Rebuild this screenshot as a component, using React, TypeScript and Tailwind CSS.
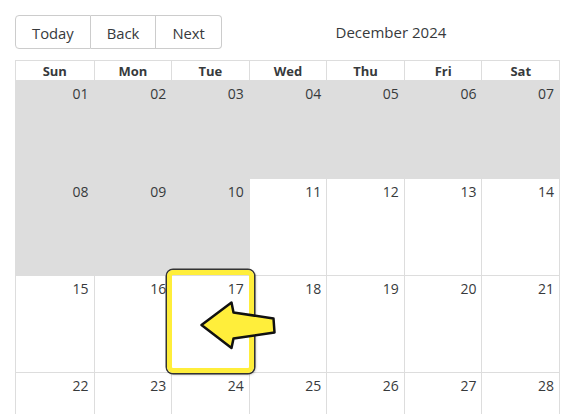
const weekDays = ["Sun", "Mon", "Tue", "Wed", "Thu", "Fri", "Sat"];

// Dec 2024 starts on a Sunday; first 10 days are greyed out (past)
const weeks = [
  [1, 2, 3, 4, 5, 6, 7],
  [8, 9, 10, 11, 12, 13, 14],
  [15, 16, 17, 18, 19, 20, 21],
  [22, 23, 24, 25, 26, 27, 28],
];

const pad = (n: number) => (n < 10 ? `0${n}` : `${n}`);

const CalendarToolbar = () => {
  return (
    <div className="flex items-center h-[34px]">
      <div className="flex">
        <button className="h-[34px] px-4 pt-[2px] border border-[#cccccc] rounded-l-[4px] text-[14.8px] text-[#373a3c] bg-white">
          Today
        </button>
        <button className="h-[34px] px-4 pt-[2px] border border-l-0 border-[#cccccc] text-[14.8px] text-[#373a3c] bg-white">
          Back
        </button>
        <button className="h-[34px] px-4 pt-[2px] border border-l-0 border-[#cccccc] rounded-r-[4px] text-[14.8px] text-[#373a3c] bg-white">
          Next
        </button>
      </div>
      <div className="flex-1 text-center text-[15px] text-[#373a3c]">December 2024</div>
    </div>
  );
};

const MonthView = () => {
  return (
    <div className="mt-[11px] border border-[#dddddd]">
      <div className="grid grid-cols-7 border-b border-[#dddddd] h-[20px]">
        {weekDays.map((day, i) => (
          <div
            key={day}
            className={`text-center font-bold text-[13px] leading-[21px] text-[#373a3c] ${
              i > 0 ? "border-l border-[#dddddd]" : ""
            }`}
          >
            {day}
          </div>
        ))}
      </div>
      {weeks.map((week, w) => (
        <div
          key={w}
          className={`grid grid-cols-7 h-[97px] ${w > 0 ? "border-t border-[#dddddd]" : ""}`}
        >
          {week.map((d, i) => (
            <div
              key={d}
              className={`text-right pr-[5px] pt-[2px] text-[14px] text-[#373a3c] ${
                i > 0 ? "border-l border-[#dddddd]" : ""
              } ${d <= 10 ? "bg-[#dddddd]" : "bg-white"}`}
            >
              {pad(d)}
            </div>
          ))}
        </div>
      ))}
    </div>
  );
};

export default function App() {
  return (
    <div
      className="relative h-[414px] overflow-hidden bg-white px-[15px] pt-[15px]"
      style={{ fontFamily: '"Open Sans", "Noto Sans", sans-serif' }}
    >
      <CalendarToolbar />
      <MonthView />

      {/* highlight around the 17th */}
      <div className="absolute left-[167px] top-[270px] w-[87px] h-[103px] border-[5px] border-[#ffee3b] rounded-[6px] shadow-[0_0_0_1.5px_#333333,1px_1px_3px_rgba(0,0,0,0.5)]" />
      <svg
        className="absolute left-[195px] top-[295px]"
        width="90"
        height="60"
        viewBox="0 0 90 60"
      >
        <polygon
          points="6.5,30 36.5,7.5 38.5,17.5 78.5,23.5 79.5,37.5 38.5,43.5 36.5,53"
          fill="#ffee3b"
          stroke="#111111"
          strokeWidth="2.5"
          strokeLinejoin="round"
        />
      </svg>
    </div>
  );
}
